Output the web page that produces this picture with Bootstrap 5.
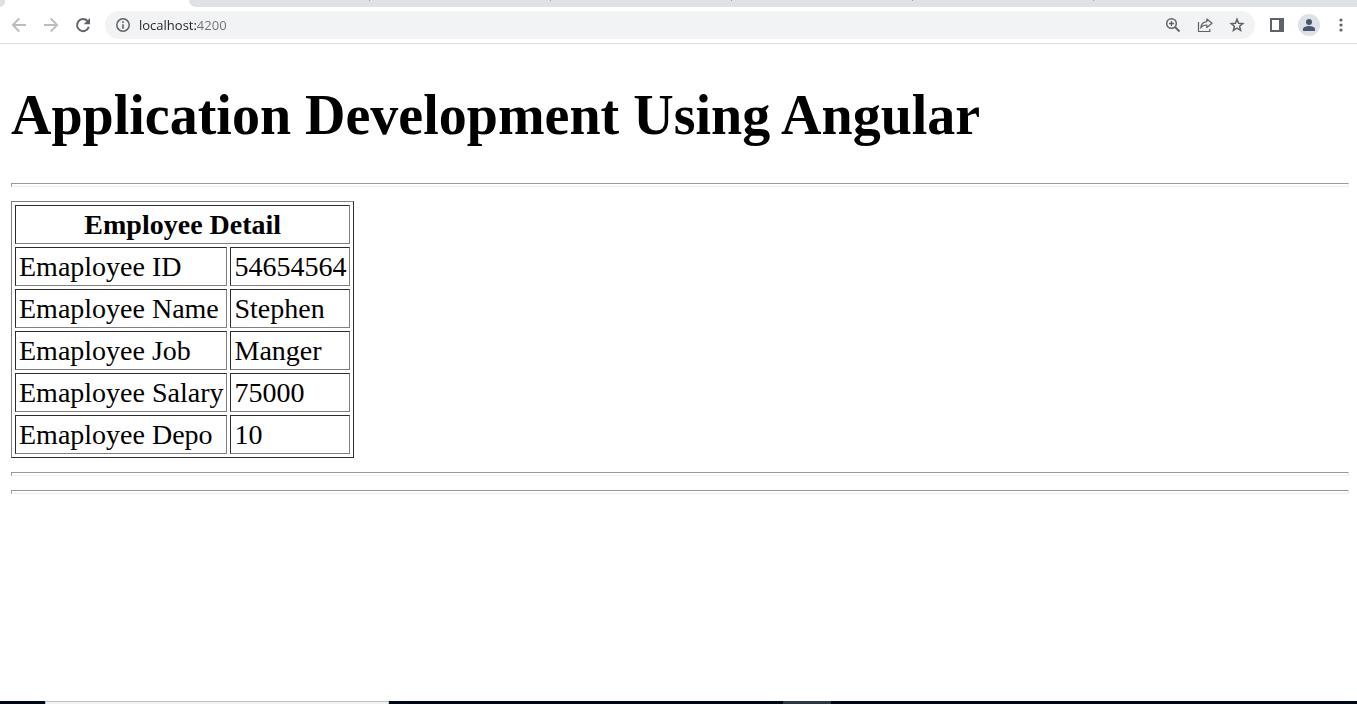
<!DOCTYPE html>
<html lang="en">
<head>
<meta charset="utf-8">
<meta name="viewport" content="width=device-width, initial-scale=1">
<title>Application Development Using Angular</title>
<link href="https://cdn.jsdelivr.net/npm/bootstrap@5.3.0/dist/css/bootstrap.min.css" rel="stylesheet">
<style>
  .tab-strip { height: 7px; background: #dee1e6; }
  .tab-edge { width: 5px; background: #dee1e6; border-bottom-right-radius: 5px; }
  .tab-active { width: 184px; background: #fff; }
  .tab-rest { background: #dee1e6; border-bottom-left-radius: 7px; }
  .tab-strip-base { background: #fff; }
  .tab-slot { width: 181px; height: 1px; border-right: 1px solid #9a9da3; }
  .toolbar { height: 37px; padding-left: 3px; border-bottom: 1px solid #dadce0; }
  .tool { width: 32px; height: 28px; color: #5f6368; }
  .tool:disabled { color: #babcbe; opacity: 1; border: 0; }
  .omnibox { height: 28px; margin: 0 6px; padding: 0 2px 0 8px; background: #f1f3f4; border-radius: 14px; }
  .site-info { width: 20px; }
  .address { margin-left: 6px; font: 13px/20px "Open Sans", sans-serif; color: #202124; outline: 0;
    background: linear-gradient(90deg, #202124 58px, #6b6f74 58px); -webkit-background-clip: text; background-clip: text;
    -webkit-text-fill-color: transparent; }
  .avatar { width: 22px; height: 22px; background: #dee1e6; color: #4a5670; }
  .document { padding: 0 8px 0 11px; font: 28px/32px "Liberation Serif", "Times New Roman", serif; color: #000; }
  .document h1 { margin: 39px 0 35px; font-size: 56px; line-height: 65px; font-weight: 700; color: #000; }
  .rule { height: 4px; margin: 0 0 14px; opacity: 1; border: 1px solid; border-color: #9a9a9a #eee #eee #9a9a9a; }
  .detail { border-collapse: separate; border-spacing: 3px; border: 1px solid; border-color: #808080 #2c2c2c #2c2c2c #808080; margin-bottom: 14px; }
  .detail th, .detail td { height: 39px; padding: 2px 3px; border: 1px solid; border-color: #2c2c2c #808080 #808080 #2c2c2c; font-size: 28px; line-height: 32px; white-space: nowrap; }
  .detail caption { display: none; }
  .taskbar { height: 3px; background: #000817; }
  .task-search { width: 344px; margin-left: 45px; background: #f2f2f2; border: 1px solid #bfbfbf; border-bottom: 0; }
  .task-open { width: 48px; margin-left: 394px; background: #303641; }
</style>
</head>
<body class="bg-white d-flex flex-column min-vh-100">
  <header>
    <div class="tab-strip tab-strip-base d-flex overflow-hidden">
      <div class="tab-edge"></div>
      <div class="tab-active"></div>
      <div class="tab-rest d-flex flex-grow-1">
        <div class="tab-slot"></div><div class="tab-slot"></div><div class="tab-slot"></div><div class="tab-slot"></div><div class="tab-slot"></div>
      </div>
    </div>
    <nav class="toolbar d-flex align-items-center" aria-label="Browser toolbar">
      <button class="tool btn p-0 border-0 d-flex align-items-center justify-content-center" type="button" aria-label="Back" disabled>
        <svg width="16" height="16" viewBox="0 0 16 16" fill="none" stroke="currentColor" stroke-width="1.8"><path d="M15 8H2M8.300 1.500 1.800 8l6.500 6.500"/></svg>
      </button>
      <button class="tool btn p-0 border-0 d-flex align-items-center justify-content-center" type="button" aria-label="Forward" disabled>
        <svg width="16" height="16" viewBox="0 0 16 16" fill="none" stroke="currentColor" stroke-width="1.8"><path d="M1 8h13M7.700 1.500 14.200 8l-6.500 6.500"/></svg>
      </button>
      <button class="tool btn p-0 border-0 d-flex align-items-center justify-content-center" type="button" aria-label="Reload">
        <svg width="16" height="16" viewBox="0 0 16 16"><path d="M12.600 4.200A6 6 0 1 0 13.800 9.800" fill="none" stroke="currentColor" stroke-width="2"/><path d="M15 1v6.300H8.700z" fill="currentColor"/></svg>
      </button>
      <div class="omnibox d-flex align-items-center flex-grow-1">
        <button class="tool site-info btn p-0 border-0 d-flex align-items-center justify-content-center" type="button" aria-label="Site information">
          <svg width="14" height="14" viewBox="0 0 14 14"><circle cx="7" cy="7" r="6.200" fill="none" stroke="currentColor" stroke-width="1.500"/><path d="M6.200 3.300h1.600v1.600H6.200zM6.200 6.200h1.600v4.600H6.200z" fill="currentColor"/></svg>
        </button>
        <input class="address flex-grow-1 border-0 p-0" type="text" value="localhost:4200" aria-label="Address" spellcheck="false">
        <button class="tool btn p-0 border-0 d-flex align-items-center justify-content-center" type="button" aria-label="Zoom">
          <svg width="16" height="16" viewBox="0 0 16 16" fill="none" stroke="currentColor"><circle cx="6.500" cy="6.500" r="4.800" stroke-width="1.500"/><path d="m10 10 4.500 4.500" stroke-width="1.800"/><path d="M6.500 4v5M4 6.500h5" stroke-width="1.300"/></svg>
        </button>
        <button class="tool btn p-0 border-0 d-flex align-items-center justify-content-center" type="button" aria-label="Share">
          <svg width="16" height="16" viewBox="0 0 16 16" fill="none" stroke="currentColor" stroke-width="1.200"><path d="M1.500 5v9.500h11.300V12"/><path d="M9.800 2 15 6.200l-5.200 4.300V8C7 8 5 9 3.700 11c.3-3.200 2.300-6 6.100-6.400z" stroke-linejoin="round"/></svg>
        </button>
        <button class="tool btn p-0 border-0 d-flex align-items-center justify-content-center" type="button" aria-label="Bookmark">
          <svg width="16" height="16" viewBox="0 0 16 16" fill="none" stroke="currentColor" stroke-width="1.500"><path d="m8 2.300 1.600 3.900 4.200.3-3.200 2.800 1 4.100L8 11.200l-3.600 2.200 1-4.100-3.200-2.800 4.200-.3z"/></svg>
        </button>
      </div>
      <button class="tool btn p-0 border-0 d-flex align-items-center justify-content-center" type="button" aria-label="Side panel">
        <svg width="14" height="14" viewBox="0 0 14 14" fill="currentColor"><path fill-rule="evenodd" d="M0 0h14v14H0zM2 2v10h7V2z"/></svg>
      </button>
      <button class="tool btn p-0 border-0 d-flex align-items-center justify-content-center" type="button" aria-label="Profile">
        <span class="avatar rounded-circle d-flex align-items-center justify-content-center"><svg width="12" height="12" viewBox="0 0 12 12" fill="currentColor"><circle cx="6" cy="3" r="3"/><path d="M0 12v-2c0-2 3.500-3 6-3s6 1 6 3v2z"/></svg></span>
      </button>
      <button class="tool btn p-0 border-0 d-flex align-items-center justify-content-center" type="button" aria-label="Menu">
        <svg width="4" height="14" viewBox="0 0 4 14" fill="currentColor"><circle cx="2" cy="2" r="1.600"/><circle cx="2" cy="7" r="1.600"/><circle cx="2" cy="12" r="1.600"/></svg>
      </button>
    </nav>
  </header>

  <main class="document flex-grow-1">
    <h1>Application Development Using Angular</h1>
    <hr class="rule">
    <table class="detail">
      <thead>
        <tr><th colspan="2" class="text-center">Employee Detail</th></tr>
      </thead>
      <tbody>
        <tr><td>Emaployee ID</td><td>54654564</td></tr>
        <tr><td>Emaployee Name</td><td>Stephen</td></tr>
        <tr><td>Emaployee Job</td><td>Manger</td></tr>
        <tr><td>Emaployee Salary</td><td>75000</td></tr>
        <tr><td>Emaployee Depo</td><td>10</td></tr>
      </tbody>
    </table>
    <hr class="rule">
    <hr class="rule">
  </main>

  <footer class="taskbar d-flex">
    <div class="task-search"></div>
    <div class="task-open"></div>
  </footer>
<script src="https://cdn.jsdelivr.net/npm/bootstrap@5.3.0/dist/js/bootstrap.bundle.min.js"></script>
</body>
</html>
